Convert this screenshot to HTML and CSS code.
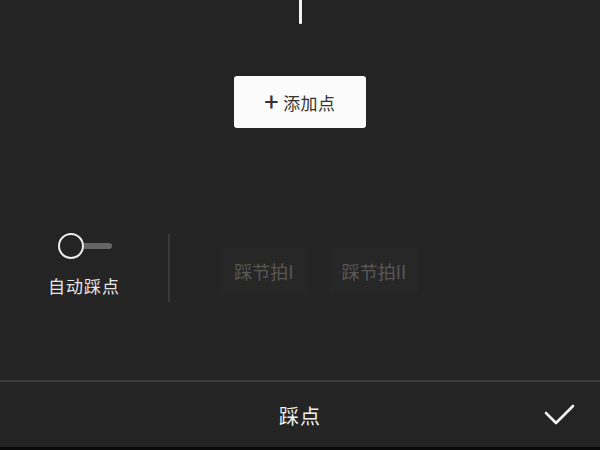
FILE: index.html
```html
<!DOCTYPE html>
<html lang="zh">
<head>
<meta charset="utf-8">
<link rel="stylesheet" href="styles.css">
</head>
<body>
<div class="screen">
  <main class="main">
    <div class="playhead"></div>
    <button class="add-btn"><span class="plus">+</span>添加点</button>
    <div class="controls">
      <div class="auto">
        <div class="toggle"><span class="knob"></span><span class="track"></span></div>
        <div class="auto-label">自动踩点</div>
      </div>
      <div class="divider"></div>
      <div class="options">
        <div class="opt">踩节拍I</div>
        <div class="opt">踩节拍II</div>
      </div>
    </div>
  </main>
  <footer class="bar">
    <div class="title">踩点</div>
    <svg class="check" width="32" height="24" viewBox="0 0 32 24"><path d="M2 9 L12 19 L29 2" fill="none" stroke="#f2f2f2" stroke-width="2.6" stroke-linecap="round" stroke-linejoin="round"/></svg>
  </footer>
  <div class="strip"></div>
</div>
</body>
</html>
```
FILE: styles.css
```css
html, body { margin: 0; padding: 0; }
body {
  width: 600px; height: 450px; overflow: hidden;
  background: #242424;
  font-family: "Noto Sans CJK SC", "Noto Sans", sans-serif;
}
.screen { display: flex; flex-direction: column; height: 450px; }
.main {
  height: 380px;
  display: flex; flex-direction: column; align-items: center;
}
.playhead { width: 3px; height: 24px; background: #f4f4f4; margin-left: 1px; border-radius: 0 0 1px 1px; }
.add-btn {
  margin-top: 52px;
  width: 132px; height: 52px;
  background: #fbfbfb; border: none; border-radius: 3px;
  font-family: inherit; font-size: 17px; color: #333;
  display: flex; align-items: center; justify-content: center;
  padding: 0; letter-spacing: 0.5px;
}
.plus { font-size: 25px; font-weight: 500; margin-right: 4px; line-height: 1; position: relative; top: -2px; }
.controls {
  align-self: stretch;
  margin-top: 105px;
  display: flex; align-items: flex-start;
}
.auto { width: 168px; display: flex; flex-direction: column; align-items: center; }
.toggle { display: flex; align-items: center; margin-left: 1px; }
.knob {
  width: 22px; height: 22px; border: 2.5px solid #ececec; border-radius: 50%;
}
.track { width: 28px; height: 6px; background: #666; border-radius: 0 3px 3px 0; }
.auto-label { margin-top: 16px; font-size: 17px; color: #e6e6e6; line-height: 22px; letter-spacing: 1px; }
.divider { width: 2px; height: 68px; background: #393939; margin-top: 1px; }
.options { display: flex; gap: 22px; margin-left: 50px; margin-top: 15px; }
.opt {
  width: 88px; height: 45px;
  background: #272727;
  color: #575757; font-size: 18px;
  display: flex; align-items: center; justify-content: center;
}
.bar {
  flex: 1;
  border-top: 2px solid #3a3a3a;
  display: flex; align-items: center; justify-content: center;
  position: relative;
}
.title { font-size: 20px; color: #efefef; letter-spacing: 1px; margin-top: 2px; }
.check { position: absolute; right: 24px; top: 22px; }
.strip { height: 3px; background: #0a0a0a; }
```
